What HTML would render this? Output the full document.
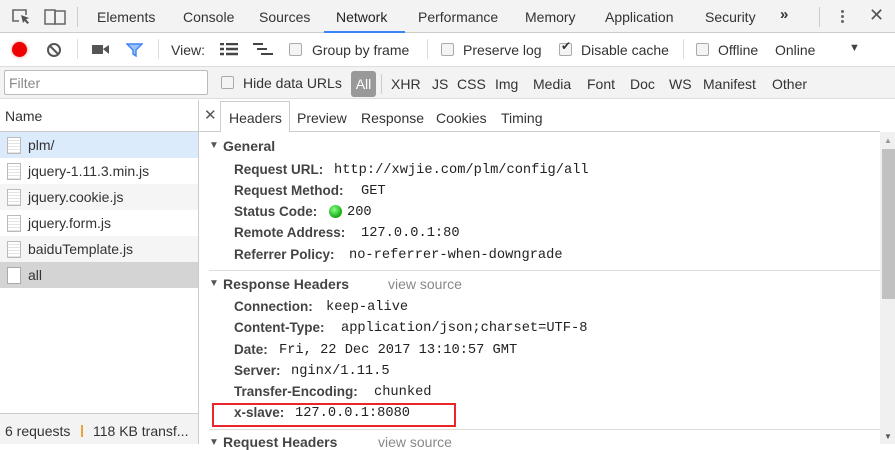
<!DOCTYPE html>
<html><head><style>
*{margin:0;padding:0;box-sizing:border-box}
body{width:895px;height:444px;overflow:hidden;background:#fff;font-family:"Liberation Sans",sans-serif;font-size:14px;color:#333;position:relative}
.a{position:absolute;white-space:nowrap}
.mono{font-family:"Liberation Mono",monospace;font-size:13.7px;color:#222}
.lb{font-weight:bold;color:#444;font-size:13.5px}
.cb{position:absolute;width:13px;height:13px;border:1px solid #aaa;border-radius:2px;background:#f4f4f4}
</style></head><body>
<div class="a" style="left:0;top:0;width:895px;height:33px;background:#f3f3f3;border-bottom:1px solid #ccc"></div>
<svg class="a" style="left:10px;top:7px" width="56" height="20"><path d="M9 14H3V3h13v5" fill="none" stroke="#666" stroke-width="1.6"/><path d="M11 8l8 3-3 1.5 3 3-1.5 1.5-3-3L13 16z" fill="#555"/><rect x="35" y="3" width="10" height="14" fill="none" stroke="#666" stroke-width="1.5"/><rect x="45" y="4" width="10" height="13" fill="none" stroke="#666" stroke-width="1.5"/></svg>
<div class="a" style="left:77px;top:7px;width:1px;height:20px;background:#ccc"></div>
<div class="a" style="left:97px;top:9px;color:#333">Elements</div>
<div class="a" style="left:183px;top:9px">Console</div>
<div class="a" style="left:259px;top:9px">Sources</div>
<div class="a" style="left:336px;top:9px;color:#222">Network</div>
<div class="a" style="left:324px;top:31px;width:81px;height:2px;background:#3e82f7"></div>
<div class="a" style="left:418px;top:9px">Performance</div>
<div class="a" style="left:525px;top:9px">Memory</div>
<div class="a" style="left:605px;top:9px">Application</div>
<div class="a" style="left:705px;top:9px">Security</div>
<div class="a" style="left:780px;top:6px;font-size:15px;font-weight:bold">»</div>
<div class="a" style="left:819px;top:7px;width:1px;height:20px;background:#ccc"></div>
<div class="a" style="left:841px;top:10px;width:3px;height:3px;background:#666;border-radius:2px;box-shadow:0 5px 0 #666,0 10px 0 #666"></div>
<div class="a" style="left:869px;top:5px;font-size:18px;color:#555">✕</div>
<div class="a" style="left:0;top:66px;width:895px;height:1px;background:#ddd"></div>
<div class="a" style="left:12px;top:42px;width:15px;height:15px;border-radius:50%;background:#e00;box-shadow:0 0 3px #f88"></div>
<svg class="a" style="left:46px;top:42px" width="16" height="16"><circle cx="8" cy="8" r="6" fill="none" stroke="#555" stroke-width="2"/><path d="M4 4l8 8" stroke="#555" stroke-width="2"/></svg>
<div class="a" style="left:77px;top:39px;width:1px;height:20px;background:#ddd"></div>
<svg class="a" style="left:92px;top:44px" width="18" height="11"><rect x="0" y="1" width="11" height="9" fill="#555"/><path d="M11 5l6-4v9z" fill="#555"/></svg>
<svg class="a" style="left:126px;top:43px" width="17" height="14"><path d="M1 1h15l-6 6v6l-3-2V7z" fill="#9cc3f5" stroke="#3e82f7" stroke-width="1.4"/></svg>
<div class="a" style="left:158px;top:39px;width:1px;height:20px;background:#ddd"></div>
<div class="a" style="left:171px;top:42px">View:</div>
<svg class="a" style="left:220px;top:43px" width="18" height="13"><path d="M0 1h4M6 1h12M0 6h4M6 6h12M0 11h4M6 11h12" stroke="#444" stroke-width="2.5"/></svg>
<svg class="a" style="left:253px;top:43px" width="22" height="14"><path d="M0 1h10M4 6h10M8 11h12" stroke="#444" stroke-width="2"/></svg>
<div class="cb" style="left:289px;top:43px"></div>
<div class="a" style="left:312px;top:42px">Group by frame</div>
<div class="a" style="left:427px;top:39px;width:1px;height:20px;background:#ddd"></div>
<div class="cb" style="left:441px;top:43px"></div>
<div class="a" style="left:463px;top:42px">Preserve log</div>
<div class="cb" style="left:559px;top:43px"></div>
<div class="a" style="left:561px;top:39px;font-size:12px;color:#333">✔</div>
<div class="a" style="left:581px;top:42px">Disable cache</div>
<div class="a" style="left:683px;top:39px;width:1px;height:20px;background:#ddd"></div>
<div class="cb" style="left:696px;top:43px"></div>
<div class="a" style="left:718px;top:42px">Offline</div>
<div class="a" style="left:775px;top:42px">Online</div>
<div class="a" style="left:849px;top:42px;font-size:11px;color:#444">▼</div>
<div class="a" style="left:0;top:67px;width:895px;height:32px;background:#f3f3f3;border-bottom:1px solid #ddd"></div>
<div class="a" style="left:4px;top:70px;width:204px;height:25px;background:#fff;border:1px solid #bbb;border-radius:2px"></div>
<div class="a" style="left:9px;top:75px;color:#888">Filter</div>
<div class="cb" style="left:221px;top:76px"></div>
<div class="a" style="left:243px;top:75px">Hide data URLs</div>
<div class="a" style="left:351px;top:71px;width:25px;height:26px;background:#999;border-radius:3px;color:#fff;text-align:center;line-height:26px">All</div>
<div class="a" style="left:381px;top:74px;width:1px;height:20px;background:#ccc"></div>
<div class="a" style="left:391px;top:76px">XHR</div>
<div class="a" style="left:432px;top:76px">JS</div>
<div class="a" style="left:457px;top:76px">CSS</div>
<div class="a" style="left:495px;top:76px">Img</div>
<div class="a" style="left:533px;top:76px">Media</div>
<div class="a" style="left:587px;top:76px">Font</div>
<div class="a" style="left:630px;top:76px">Doc</div>
<div class="a" style="left:669px;top:76px">WS</div>
<div class="a" style="left:703px;top:76px">Manifest</div>
<div class="a" style="left:772px;top:76px">Other</div>
<div class="a" style="left:198px;top:100px;width:1px;height:344px;background:#ccc"></div>
<div class="a" style="left:0;top:131px;width:198px;height:1px;background:#ccc"></div>
<div class="a" style="left:5px;top:108px">Name</div>
<div class="a" style="left:0;top:132px;width:198px;height:26px;background:#dcebfc"></div>
<div class="a" style="left:0;top:184px;width:198px;height:26px;background:#f5f5f5"></div>
<div class="a" style="left:0;top:236px;width:198px;height:26px;background:#f5f5f5"></div>
<div class="a" style="left:0;top:262px;width:198px;height:26px;background:#d4d4d4"></div>
<div class="a" style="left:7px;top:137px;width:14px;height:17px;border:1px solid #bbb;background:repeating-linear-gradient(#fff 0 2px,#e4e4e4 2px 3px)"></div>
<div class="a" style="left:7px;top:163px;width:14px;height:17px;border:1px solid #bbb;background:repeating-linear-gradient(#fff 0 2px,#e4e4e4 2px 3px)"></div>
<div class="a" style="left:7px;top:189px;width:14px;height:17px;border:1px solid #bbb;background:repeating-linear-gradient(#fff 0 2px,#e4e4e4 2px 3px)"></div>
<div class="a" style="left:7px;top:215px;width:14px;height:17px;border:1px solid #bbb;background:repeating-linear-gradient(#fff 0 2px,#e4e4e4 2px 3px)"></div>
<div class="a" style="left:7px;top:241px;width:14px;height:17px;border:1px solid #bbb;background:repeating-linear-gradient(#fff 0 2px,#e4e4e4 2px 3px)"></div>
<div class="a" style="left:7px;top:267px;width:14px;height:17px;border:1px solid #aaa;background:#fff"></div>
<div class="a" style="left:28px;top:137px">plm/</div>
<div class="a" style="left:28px;top:163px">jquery-1.11.3.min.js</div>
<div class="a" style="left:28px;top:189px">jquery.cookie.js</div>
<div class="a" style="left:28px;top:215px">jquery.form.js</div>
<div class="a" style="left:28px;top:241px">baiduTemplate.js</div>
<div class="a" style="left:28px;top:267px">all</div>
<div class="a" style="left:0;top:413px;width:198px;height:31px;background:#f3f3f3;border-top:1px solid #ccc"></div>
<div class="a" style="left:5px;top:423px">6 requests</div>
<div class="a" style="left:81px;top:425px;width:2px;height:12px;background:#e8a43a"></div>
<div class="a" style="left:93px;top:423px">118 KB transf...</div>
<div class="a" style="left:199px;top:131px;width:681px;height:1px;background:#ccc"></div>
<div class="a" style="left:204px;top:106px;font-size:15px;color:#555">✕</div>
<div class="a" style="left:220px;top:101px;width:70px;height:31px;background:#fff;border:1px solid #ccc;border-bottom:none"></div>
<div class="a" style="left:229px;top:110px">Headers</div>
<div class="a" style="left:297px;top:110px">Preview</div>
<div class="a" style="left:361px;top:110px">Response</div>
<div class="a" style="left:436px;top:110px">Cookies</div>
<div class="a" style="left:501px;top:110px">Timing</div>
<div class="a" style="left:880px;top:132px;width:15px;height:312px;background:#f0f0f0"></div>
<div class="a" style="left:882px;top:149px;width:13px;height:150px;background:#c1c1c1"></div>
<div class="a" style="left:884px;top:136px;font-size:8px;color:#999">▲</div>
<div class="a" style="left:884px;top:432px;font-size:8px;color:#555">▼</div>
<div class="a" style="left:209px;top:140px;font-size:10px;color:#555">▼</div>
<div class="a lb" style="left:223px;top:138px;font-size:14px">General</div>
<div class="a lb" style="left:234px;top:162px">Request URL:</div><div class="a mono" style="left:334px;top:163px">http://xwjie.com/plm/config/all</div>
<div class="a lb" style="left:234px;top:183px">Request Method:</div><div class="a mono" style="left:361px;top:184px">GET</div>
<div class="a lb" style="left:234px;top:204px">Status Code:</div>
<div class="a" style="left:329px;top:205px;width:13px;height:13px;border-radius:50%;background:radial-gradient(circle at 40% 35%,#8f8,#1a1 70%)"></div>
<div class="a mono" style="left:347px;top:205px">200</div>
<div class="a lb" style="left:234px;top:225px">Remote Address:</div><div class="a mono" style="left:361px;top:226px">127.0.0.1:80</div>
<div class="a lb" style="left:234px;top:247px">Referrer Policy:</div><div class="a mono" style="left:349px;top:248px">no-referrer-when-downgrade</div>
<div class="a" style="left:209px;top:270px;width:671px;height:1px;background:#ddd"></div>
<div class="a" style="left:209px;top:278px;font-size:10px;color:#555">▼</div>
<div class="a lb" style="left:223px;top:276px;font-size:14px">Response Headers</div>
<div class="a" style="left:388px;top:276px;color:#888">view source</div>
<div class="a lb" style="left:234px;top:299px">Connection:</div><div class="a mono" style="left:326px;top:300px">keep-alive</div>
<div class="a lb" style="left:234px;top:320px">Content-Type:</div><div class="a mono" style="left:341px;top:321px">application/json;charset=UTF-8</div>
<div class="a lb" style="left:234px;top:342px">Date:</div><div class="a mono" style="left:279px;top:343px">Fri, 22 Dec 2017 13:10:57 GMT</div>
<div class="a lb" style="left:234px;top:363px">Server:</div><div class="a mono" style="left:291px;top:364px">nginx/1.11.5</div>
<div class="a lb" style="left:234px;top:384px">Transfer-Encoding:</div><div class="a mono" style="left:374px;top:385px">chunked</div>
<div class="a lb" style="left:234px;top:405px">x-slave:</div><div class="a mono" style="left:295px;top:406px">127.0.0.1:8080</div>
<div class="a" style="left:212px;top:403px;width:244px;height:24px;border:2px solid #e8262b"></div>
<div class="a" style="left:209px;top:429px;width:671px;height:1px;background:#ddd"></div>
<div class="a" style="left:209px;top:437px;font-size:10px;color:#555">▼</div>
<div class="a lb" style="left:223px;top:434px;font-size:14px">Request Headers</div>
<div class="a" style="left:378px;top:434px;color:#888">view source</div>
</body></html>
